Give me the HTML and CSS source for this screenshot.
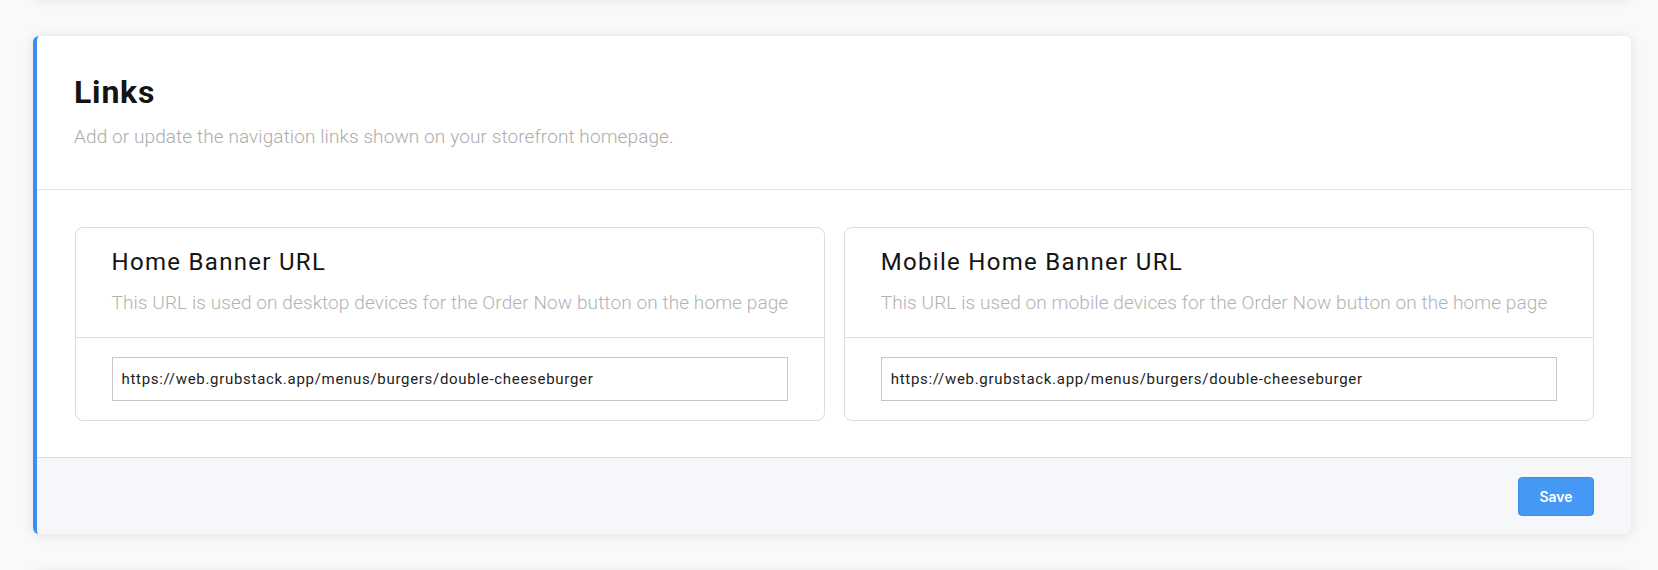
FILE: index.html
```html
<!DOCTYPE html>
<html lang="en">
<head>
<meta charset="utf-8">
<title>Links</title>
<link rel="stylesheet" href="styles.css">
</head>
<body>
<div class="page">
  <div class="card card-ghost"></div>
  <section class="card card-main">
    <header class="card-header">
      <h1 class="card-title">Links</h1>
      <p class="card-subtitle">Add or update the navigation links shown on your storefront homepage.</p>
    </header>
    <div class="card-body">
      <div class="field-card">
        <div class="field-head">
          <h2 class="field-title">Home Banner URL</h2>
          <p class="field-desc">This URL is used on desktop devices for the Order Now button on the home page</p>
        </div>
        <div class="field-body">
          <input class="field-input" type="text" value="https://web.grubstack.app/menus/burgers/double-cheeseburger">
        </div>
      </div>
      <div class="field-card">
        <div class="field-head">
          <h2 class="field-title">Mobile Home Banner URL</h2>
          <p class="field-desc">This URL is used on mobile devices for the Order Now button on the home page</p>
        </div>
        <div class="field-body">
          <input class="field-input" type="text" value="https://web.grubstack.app/menus/burgers/double-cheeseburger">
        </div>
      </div>
    </div>
    <footer class="card-footer">
      <button class="btn-save" type="button">Save</button>
    </footer>
  </section>
  <div class="card card-ghost"></div>
</div>
</body>
</html>
```

FILE: styles.css
```css
html, body {
  margin: 0;
  padding: 0;
}
body {
  background: #f9f9f9;
  font-family: Roboto, "Noto Sans", Arial, sans-serif;
  overflow: hidden;
  height: 570px;
}
.page {
  display: flex;
  flex-direction: column;
  gap: 38px;
  padding: 0 27px 0 33px;
  margin-top: -40px;
}
.card {
  background: #fff;
  border-radius: 6px;
  box-shadow: 0 1px 12px rgba(0, 0, 0, 0.1);
}
.card-ghost {
  height: 38px;
  flex: none;
}
.card-main {
  border-left: 4px solid #3b8ef3;
  overflow: hidden;
}
.card-header {
  padding: 37px 37px 39px;
  border-bottom: 1px solid #e3e3e3;
}
.card-title {
  margin: 0;
  font-size: 32px;
  line-height: 38.4px;
  font-weight: 700;
  letter-spacing: 0.8px;
  color: #141414;
}
.card-subtitle {
  margin: 12px 0 0;
  font-size: 19px;
  line-height: 27px;
  font-weight: 300;
  letter-spacing: 0.1px;
  color: #acacac;
}
.card-body {
  display: grid;
  grid-template-columns: 1fr 1fr;
  gap: 19px;
  padding: 37px 37px 36px 37.5px;
}
.field-card {
  border: 1px solid #dcdcdc;
  border-radius: 8px;
  min-width: 0;
}
.field-head {
  padding: 21px 36px 21px;
  border-bottom: 1px solid #dedede;
}
.field-title {
  margin: 0;
  font-size: 24px;
  line-height: 26.4px;
  font-weight: 400;
  letter-spacing: 1.3px;
  color: #141414;
}
.field-desc {
  margin: 13px 0 0;
  font-size: 19px;
  line-height: 27px;
  font-weight: 300;
  letter-spacing: 0.1px;
  color: #b2b2b2;
  white-space: nowrap;
}
.field-body {
  padding: 19px 36px;
}
.field-input {
  display: block;
  box-sizing: border-box;
  width: 100%;
  height: 44px;
  margin: 0;
  padding: 0 9px;
  border: 1px solid #c6c6c6;
  border-radius: 0;
  background: #fff;
  font-family: Roboto, "Noto Sans", Arial, sans-serif;
  font-size: 15px;
  letter-spacing: 0.7px;
  color: #222;
  outline: none;
}
.card-footer {
  display: flex;
  justify-content: flex-end;
  padding: 19px 37px 18px;
  border-top: 1px solid #dedede;
  background: #f6f7fb;
}
.btn-save {
  width: 76px;
  height: 39px;
  border: 1px solid #3a8deb;
  border-radius: 4px;
  background: #4598f3;
  color: #fff;
  font-family: Inter, "Liberation Sans", Arial, sans-serif;
  font-size: 14px;
  font-weight: 600;
  padding: 0;
  cursor: pointer;
}
```
